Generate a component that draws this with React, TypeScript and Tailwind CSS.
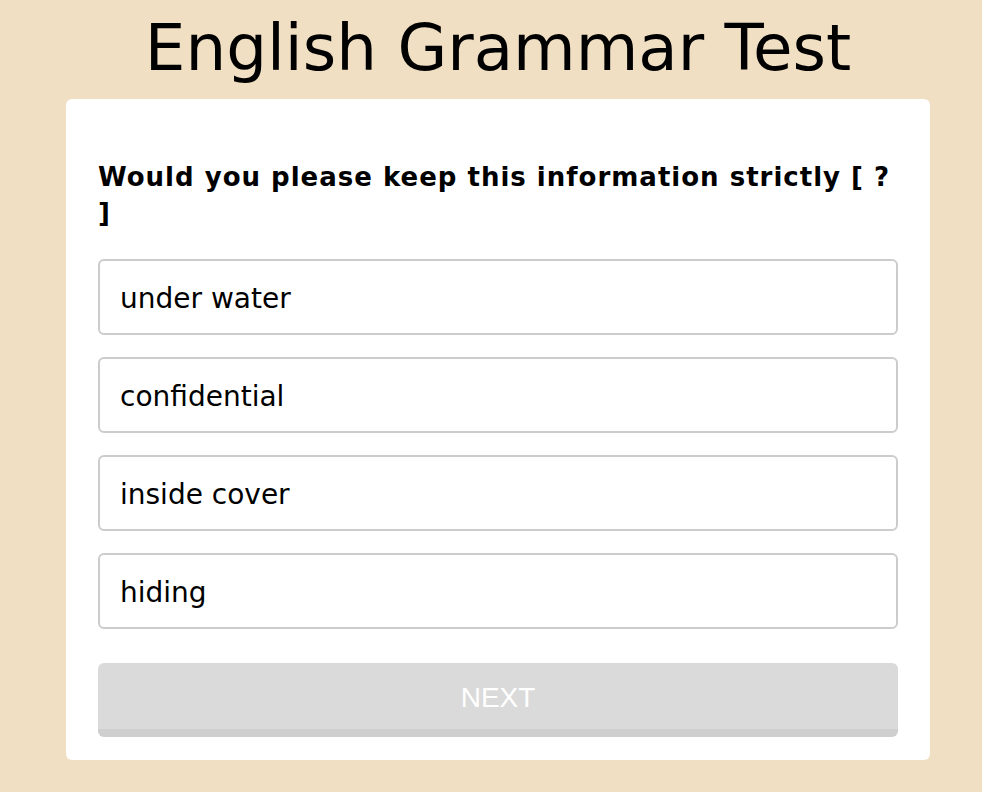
const options = ["under water", "confidential", "inside cover", "hiding"];

export default function App() {
  return (
    <div className="min-h-screen bg-[#f0dfc3] pb-8 font-['DejaVu_Sans',Verdana,sans-serif] text-black">
      <div className="ml-[66px] w-[864px]">
        <h1 className="pt-[8px] text-center text-[64.3px] leading-[80px] font-normal">
          English Grammar Test
        </h1>
        <div className="mt-[11px] rounded-md bg-white px-8 pt-[60px] pb-[23px]">
          <p className="text-[26px] font-bold leading-[36px] tracking-[1px]">
            Would you please keep this information strictly [ ? ]
          </p>
          <div className="mt-[28px] flex flex-col gap-[22px]">
            {options.map((o) => (
              <div
                key={o}
                className="flex h-[76px] items-center rounded-md border-2 border-[#cccccc] px-5 pt-1 text-[28px]"
              >
                {o}
              </div>
            ))}
          </div>
          <button className="mt-[34px] flex h-[74px] w-full items-center justify-center rounded-md border-b-[8px] border-[#cfcfcf] bg-[#dadada] pt-1 font-['Liberation_Sans',Arial,sans-serif] text-[28px] text-white">
            NEXT
          </button>
        </div>
      </div>
    </div>
  );
}
